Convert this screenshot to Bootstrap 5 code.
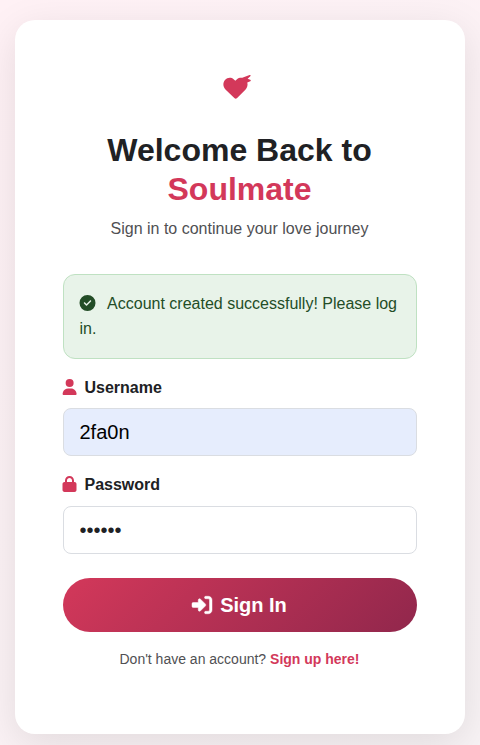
<!DOCTYPE html>
<html lang="en">
<head>
<meta charset="utf-8">
<meta name="viewport" content="width=device-width, initial-scale=1">
<title>Soulmate – Sign In</title>
<link href="https://cdn.jsdelivr.net/npm/bootstrap@5.3.0/dist/css/bootstrap.min.css" rel="stylesheet">
<style>
:root{--rose:#d3385a;}
body{font-family:"Liberation Sans",Arial,sans-serif;line-height:1.6;height:745px;overflow:hidden;background:linear-gradient(135deg,#fff1f5 0%,#f8f3f5 100%);}
.login-wrap{padding:20px 15px;}
.login-card{border:0;border-radius:20px;padding:48px;height:714.4px;box-shadow:0 10px 40px rgba(0,0,0,.1);}
.rose{color:var(--rose);}
.brand-icon{height:63px;padding-top:6px;}
.brand-icon svg{display:block;margin-left:159px;}
.card-head,.signup{margin-right:1px;}
h1{font-size:32px;line-height:38.7px;color:#202124;}
.subtitle{color:#505053;margin-bottom:32px;}
.alert-ok{background:#e8f3e9;border:1px solid #bfe1c2;color:#234d27;border-radius:12px;padding:16px 15.5px;height:84.6px;line-height:25.2px;}
.alert-ok svg{vertical-align:-2px;margin-left:-.5px;margin-right:7.5px;}
.form-label{color:#202124;font-weight:600;display:block;}
.form-label svg{color:var(--rose);vertical-align:-2px;margin-left:-1px;margin-right:7.5px;}
.form-control{height:48px;border:1px solid #dadde2;border-radius:8px;font-size:20px;padding:8px 15.5px;color:#202124;}
.form-control[type=password]{padding-top:9px;padding-bottom:7px;}
.autofilled,.autofilled:focus{background:#e6edfd;color:#000;}
.btn-sign{height:54px;border:0;border-radius:50px;font-size:20px;font-weight:600;color:#fff;padding:0 13px 0 12px;background:linear-gradient(135deg,#d3385a 0%,#91274c 100%);}
.btn-sign:hover{color:#fff;}
.signup{font-size:14px;color:#505053;}
</style>
<script src="https://cdn.jsdelivr.net/npm/bootstrap@5.3.0/dist/js/bootstrap.bundle.min.js"></script>
</head>
<body>
<main class="login-wrap">
  <div class="card login-card">
    <div class="card-head text-center">
      <div class="brand-icon rose">
        <svg width="30" height="26" viewBox="0 0 30 26" fill="currentColor" aria-hidden="true"><path d="M13.7 24.700Q13.100 24.700 12.300 24L3.700 15.700C.8 12.800.7 8.500 3 6 5.500 3.300 9.200 3.300 11.600 5.200L13.300 6.700 15 5.300C16.400 4 18 3.600 20.300 3.800L27.600 1C28.600.7 28.900 1.600 28.300 2.200L25.600 4.800 28.200 5.800C29 6.100 28.900 6.900 28.300 7.300L25.300 8.600C26 11.300 25.200 13.800 23.600 15.600L15.100 24Q14.300 24.700 13.700 24.700Z"/></svg>
      </div>
      <h1 class="fw-bold mb-2">Welcome Back to <span class="rose">Soulmate</span></h1>
      <p class="subtitle">Sign in to continue your love journey</p>
    </div>
    <div class="alert-ok mb-3" role="alert">
      <svg width="17" height="16" viewBox="-16 0 544 512" fill="currentColor" aria-hidden="true"><path d="M256 512A256 256 0 1 0 256 0a256 256 0 1 0 0 512zM369 209L241 337c-9.400 9.400-24.600 9.400-33.900 0l-64-64c-9.400-9.400-9.400-24.600 0-33.900s24.600-9.400 33.900 0l47 47L335 175c9.400-9.400 24.600-9.400 33.900 0s9.400 24.600 0 33.900z"/></svg>
      Account created successfully! Please log in.
    </div>
    <form onsubmit="return false">
      <div class="mb-3">
        <label class="form-label" for="username"><svg width="15" height="16" viewBox="-20 0 480 512" fill="currentColor" aria-hidden="true"><path d="M224 256A128 128 0 1 0 224 0a128 128 0 1 0 0 256zm-45.700 48C79.800 304 0 383.800 0 482.300C0 498.700 13.300 512 29.700 512H418.300c16.400 0 29.700-13.300 29.700-29.700C448 383.800 368.200 304 269.700 304H178.300z"/></svg>Username</label>
        <input class="form-control autofilled" id="username" type="text" value="2fa0n">
      </div>
      <div class="mb-4">
        <label class="form-label" for="password"><svg width="15" height="16" viewBox="-16 0 480 512" fill="currentColor" aria-hidden="true"><path d="M144 144v48H304V144c0-44.200-35.800-80-80-80s-80 35.800-80 80zM80 192V144C80 64.500 144.500 0 224 0s144 64.500 144 144v48h16c35.300 0 64 28.700 64 64V448c0 35.300-28.700 64-64 64H64c-35.300 0-64-28.700-64-64V256c0-35.300 28.700-64 64-64H80z"/></svg>Password</label>
        <input class="form-control" id="password" type="password" value="secret">
      </div>
      <button class="btn btn-sign w-100 d-flex align-items-center justify-content-center gap-2 mb-3" type="submit">
        <svg width="20" height="20" viewBox="0 0 512 512" fill="currentColor" stroke="currentColor" stroke-width="12" overflow="visible" aria-hidden="true"><path d="M217.900 105.900L340.700 228.700c7.200 7.200 11.300 17.100 11.300 27.300s-4.100 20.100-11.300 27.300L217.900 406.100c-6.400 6.400-15 9.900-24 9.900c-18.700 0-33.900-15.200-33.900-33.900V320H32c-17.700 0-32-14.300-32-32V224c0-17.700 14.300-32 32-32H160V129.900c0-18.700 15.200-33.900 33.900-33.900c9 0 17.600 3.600 24 9.900zM352 416h64c17.700 0 32-14.300 32-32V128c0-17.700-14.300-32-32-32H352c-17.700 0-32-14.300-32-32s14.300-32 32-32h64c53 0 96 43 96 96V384c0 53-43 96-96 96H352c-17.700 0-32-14.300-32-32s14.300-32 32-32z"/></svg>
        <span>Sign In</span>
      </button>
    </form>
    <p class="signup text-center">Don't have an account? <a class="rose fw-bold text-decoration-none" href="#">Sign up here!</a></p>
  </div>
</main>
</body>
</html>
